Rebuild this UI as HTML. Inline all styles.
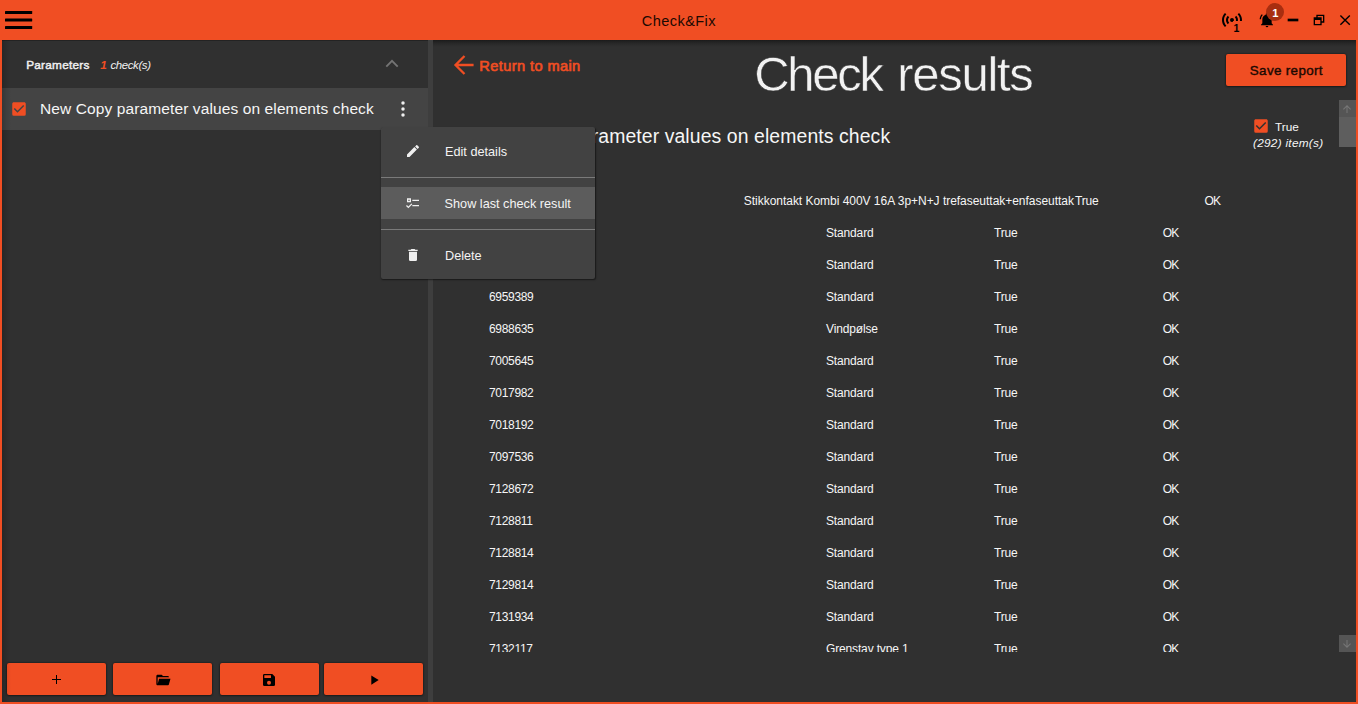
<!DOCTYPE html>
<html lang="en">
<head>
<meta charset="utf-8">
<title>Check&amp;Fix</title>
<style>
html,body{margin:0;padding:0;}
body{width:1358px;height:704px;overflow:hidden;background:#F04E23;position:relative;
  font-family:"Liberation Sans",sans-serif;color:#f4f4f4;}
.abs{position:absolute;}
.t{position:absolute;white-space:nowrap;line-height:1;}
svg{position:absolute;display:block;overflow:visible;}
#content{position:absolute;left:2px;top:40px;width:1354px;height:662px;background:#303030;overflow:hidden;}
/* title bar */
#title{left:641.8px;top:14.4px;font-size:14.6px;letter-spacing:.4px;color:#1b0902;}
.bar{position:absolute;left:5px;width:27px;height:3px;background:#000;}
/* left panel */
#lp-shadow{left:0;top:0;width:426px;height:1px;background:#232323;}
#splitter{left:426px;top:0;width:5px;height:662px;background:#3e3e3e;}
#rp-shadow{left:431px;top:0;width:923px;height:7px;background:linear-gradient(#1a1a1a,#222 25%,#2a2a2a 60%,#303030);}
#row{left:0;top:48px;width:426px;height:42px;background:#444444;}
/* bottom buttons */
.bbtn{position:absolute;top:623px;width:99px;height:32px;background:#F04E23;border-radius:2px;
  box-shadow:0 0 2px rgba(0,0,0,.7),0 1px 2px rgba(0,0,0,.3);}
/* menu */
#menu{left:379px;top:87px;width:214px;height:152px;background:#424242;border-radius:2px;
  box-shadow:.5px 1px 1.5px rgba(0,0,0,.5);}
#menu .hl{position:absolute;left:0;top:60px;width:214px;height:32px;background:#5c5c5c;}
#menu .sep{position:absolute;left:0;width:214px;height:1px;background:#7a7a7a;}
.mi{font-size:12.7px;color:#f4f4f4;}
/* table */
#list{left:431px;top:0;width:908px;height:612px;overflow:hidden;}
.c{position:absolute;white-space:nowrap;line-height:1;font-size:12px;margin-top:-.3px;letter-spacing:-.15px;color:#f6f6f6;}
.ca{left:56px;letter-spacing:-.32px}.cb{left:393px}.cc{left:561px}.cd{left:729.8px;letter-spacing:-.8px}
/* scrollbar */
.sb{position:absolute;left:1337px;width:17px;}
</style>
</head>
<body>

<!-- ===== title bar ===== -->
<svg style="left:0;top:0" width="40" height="40" viewBox="0 0 40 40"><g fill="#000"><rect x="5" y="11" width="27.2" height="3" rx=".6"/><rect x="5" y="18.5" width="27.2" height="3" rx=".6"/><rect x="5" y="26" width="27.2" height="3" rx=".6"/></g></svg>
<div class="t" id="title">Check&amp;Fix</div>

<!-- access point icon -->
<svg style="left:1220px;top:8px" width="24" height="24" viewBox="0 0 24 24"><path fill="#000" d="M4.93,4.93C3.12,6.74 2,9.24 2,12C2,14.76 3.12,17.26 4.93,19.07L6.34,17.66C4.89,16.22 4,14.22 4,12C4,9.79 4.89,7.78 6.34,6.34L4.93,4.93M19.07,4.93L17.66,6.34C19.11,7.78 20,9.79 20,12C20,14.22 19.11,16.22 17.66,17.66L19.07,19.07C20.88,17.26 22,14.76 22,12C22,9.24 20.88,6.74 19.07,4.93M7.76,7.76C6.67,8.85 6,10.35 6,12C6,13.65 6.67,15.15 7.76,16.24L9.17,14.83C8.45,14.11 8,13.11 8,12C8,10.89 8.45,9.89 9.17,9.17L7.76,7.76M16.24,7.76L14.83,9.17C15.55,9.89 16,10.89 16,12C16,13.11 15.55,14.11 14.83,14.83L16.24,16.24C17.33,15.15 18,13.65 18,12C18,10.35 17.33,8.85 16.24,7.76M12,10A2,2 0 0,0 10,12A2,2 0 0,0 12,14A2,2 0 0,0 14,12A2,2 0 0,0 12,10Z"/></svg>
<div class="abs" style="left:1232.5px;top:21px;width:12px;height:12px;background:#F04E23"></div>
<div class="t" id="ap1" style="left:1233.4px;top:23.1px;font-size:10.5px;font-weight:bold;color:#000">1</div>

<!-- bell -->
<svg style="left:1259px;top:12px" width="16" height="16" viewBox="0 0 24 24"><path fill="#000" d="M21,19V20H3V19L5,17V11C5,7.9 7.03,5.17 10,4.29C10,4.19 10,4.1 10,4A2,2 0 0,1 12,2A2,2 0 0,1 14,4C14,4.1 14,4.19 14,4.29C16.97,5.17 19,7.9 19,11V17L21,19M14,21A2,2 0 0,1 12,23A2,2 0 0,1 10,21M19.75,3.19L18.33,4.61C20.04,6.3 21,8.6 21,11H23C23,8.07 21.84,5.25 19.75,3.19M1,11H3C3,8.6 3.96,6.3 5.67,4.61L4.25,3.19C2.16,5.25 1,8.07 1,11Z"/></svg>
<div class="abs" style="left:1266px;top:3px;width:18px;height:18px;border-radius:9px;background:#A82E10"></div>
<div class="t" id="badge1" style="left:1272.2px;top:8.2px;font-size:11.2px;font-weight:bold;color:#fff">1</div>

<!-- window buttons -->
<svg style="left:1285px;top:12px" width="16" height="16" viewBox="0 0 24 24"><path fill="#000" d="M20,14H4V10H20Z"/></svg>
<svg style="left:1311px;top:12px" width="16" height="16" viewBox="0 0 24 24"><path fill="#000" d="M4,8H8V4H20V16H16V20H4V8M16,8V14H18V6H10V8H16M6,12V18H14V12H6Z"/></svg>
<svg style="left:1337px;top:12px" width="16" height="16" viewBox="0 0 16 16"><path fill="none" stroke="#000" stroke-width="1.4" d="M3.4,3.4L12.8,12.8M12.8,3.4L3.4,12.8"/></svg>

<!-- ===== content ===== -->
<div id="content">
  <div class="abs" id="lp-shadow"></div>
  <div class="abs" id="splitter"></div>
  <div class="abs" id="rp-shadow"></div>

  <!-- left panel header -->
  <div class="t" id="params" style="left:24.2px;top:19.8px;font-size:11.8px;letter-spacing:.25px;-webkit-text-stroke:.45px #f0f0f0;color:#f0f0f0">Parameters</div>
  <div class="t" id="cnt1" style="left:98.2px;top:19.8px;font-size:11.8px;font-style:italic;font-weight:bold;color:#F04E23">1</div>
  <div class="t" id="cnts" style="left:108.4px;top:19.8px;font-size:11.4px;letter-spacing:-.35px;font-style:italic;color:#f0f0f0">check(s)</div>
  <svg style="left:378px;top:12px" width="24" height="24" viewBox="0 0 24 24"><path fill="none" stroke="#747474" stroke-width="1.9" d="M6.3,14.6L12,8.9L17.7,14.6"/></svg>

  <!-- list row -->
  <div class="abs" id="row"></div>
  <svg style="left:7.75px;top:60.25px" width="18" height="18" viewBox="0 0 24 24"><path fill="#F04E23" d="M10,17L5,12L6.41,10.58L10,14.17L17.59,6.58L19,8M19,3H5C3.89,3 3,3.89 3,5V19A2,2 0 0,0 5,21H19A2,2 0 0,0 21,19V5C21,3.89 20.1,3 19,3Z"/></svg>
  <div class="t" id="rowtxt" style="left:38px;top:60.8px;font-size:15.5px;letter-spacing:.11px;color:#f6f6f6">New Copy parameter values on elements check</div>
  <svg style="left:389px;top:57px" width="24" height="24" viewBox="0 0 24 24"><g fill="#f0f0f0"><circle cx="12" cy="6.1" r="1.75"/><circle cx="12" cy="12" r="1.75"/><circle cx="12" cy="17.9" r="1.75"/></g></svg>

  <!-- bottom buttons -->
  <div class="bbtn" style="left:5px"><div class="abs" style="left:45px;top:16px;width:9px;height:1px;background:#000"></div><div class="abs" style="left:49px;top:12px;width:1px;height:9px;background:#000"></div></div>
  <div class="bbtn" style="left:111px"><svg style="left:41.5px;top:8.6px" width="16" height="16" viewBox="0 0 24 24"><path fill="#000" d="M19,20H4C2.89,20 2,19.1 2,18V6C2,4.89 2.89,4 4,4H10L12,6H19A2,2 0 0,1 21,8H21L4,8V18L6.14,10H23.21L20.93,18.5C20.7,19.37 19.92,20 19,20Z"/></svg></div>
  <div class="bbtn" style="left:218px"><svg style="left:41px;top:8.6px" width="16" height="16" viewBox="0 0 24 24"><path fill="#000" d="M15,9H5V5H15M12,19A3,3 0 0,1 9,16A3,3 0 0,1 12,13A3,3 0 0,1 15,16A3,3 0 0,1 12,19M17,3H5C3.89,3 3,3.9 3,5V19A2,2 0 0,0 5,21H19A2,2 0 0,0 21,19V7L17,3Z"/></svg></div>
  <div class="bbtn" style="left:322px"><svg style="left:41.5px;top:8.5px" width="16" height="16" viewBox="0 0 24 24"><path fill="#000" d="M8,5.14V19.14L19,12.14L8,5.14Z"/></svg></div>

  <!-- right panel header -->
  <svg style="left:450px;top:13px" width="24" height="24" viewBox="0 0 24 24"><path fill="none" stroke="#F04E23" stroke-width="2.3" d="M21.6,12H3.6M12.5,3L3.5,12L12.5,21"/></svg>
  <div class="t" id="ret" style="left:477.3px;top:18.7px;font-size:14.6px;letter-spacing:.4px;-webkit-text-stroke:.65px #F04E23;color:#F04E23">Return to main</div>
  <div class="t" id="h1" style="left:752.2px;top:10px;font-size:49px;color:#f2f2f2;-webkit-text-stroke:.5px #303030"><span id="h1a" style="letter-spacing:-2.3px">Check</span><span id="h1b" style="letter-spacing:-1.3px;margin-left:15.7px">results</span></div>
  <div class="abs" id="savebtn" style="left:1224px;top:14px;width:120px;height:32px;background:#F04E23;border-radius:2px;box-shadow:0 0 2px rgba(0,0,0,.7),0 1px 2px rgba(0,0,0,.3)"></div>
  <div class="t" id="savetxt" style="left:1247.8px;top:24.4px;font-size:13.4px;letter-spacing:.35px;-webkit-text-stroke:.4px #1b0902;color:#1b0902">Save report</div>

  <div class="t" id="h2" style="left:472.2px;top:86.8px;font-size:19.4px;letter-spacing:.1px;color:#f6f6f6">New Copy parameter values on elements check</div>

  <svg style="left:1249.75px;top:76.75px" width="18" height="18" viewBox="0 0 24 24"><path fill="#F04E23" d="M10,17L5,12L6.41,10.58L10,14.17L17.59,6.58L19,8M19,3H5C3.89,3 3,3.89 3,5V19A2,2 0 0,0 5,21H19A2,2 0 0,0 21,19V5C21,3.89 20.1,3 19,3Z"/></svg>
  <div class="t" id="true" style="left:1273px;top:82.4px;font-size:11.8px;color:#f6f6f6">True</div>
  <div class="t" id="items" style="left:1251px;top:98.4px;font-size:11.8px;letter-spacing:.27px;font-style:italic;color:#f6f6f6">(292) item(s)</div>

  <!-- table -->
  <div class="abs" id="list">
    <div class="c r1" style="left:56px;top:155px">6959380</div>
    <div class="c r1" id="r1b" style="left:310.8px;top:155px;letter-spacing:-.03px">Stikkontakt Kombi 400V 16A 3p+N+J trefaseuttak+enfaseuttak</div>
    <div class="c r1" id="r1c" style="left:641.9px;top:155px">True</div>
    <div class="c r1" id="r1d" style="left:771.4px;top:155px;letter-spacing:-.8px">OK</div>
    <div class="c ca" style="top:187px">6959383</div><div class="c cb" style="top:187px">Standard</div><div class="c cc" style="top:187px">True</div><div class="c cd" style="top:187px">OK</div>
    <div class="c ca" style="top:219px">6959386</div><div class="c cb" style="top:219px">Standard</div><div class="c cc" style="top:219px">True</div><div class="c cd" style="top:219px">OK</div>
    <div class="c ca" style="top:251px">6959389</div><div class="c cb" style="top:251px">Standard</div><div class="c cc" style="top:251px">True</div><div class="c cd" style="top:251px">OK</div>
    <div class="c ca" style="top:283px">6988635</div><div class="c cb" style="top:283px">Vindpølse</div><div class="c cc" style="top:283px">True</div><div class="c cd" style="top:283px">OK</div>
    <div class="c ca" style="top:315px">7005645</div><div class="c cb" style="top:315px">Standard</div><div class="c cc" style="top:315px">True</div><div class="c cd" style="top:315px">OK</div>
    <div class="c ca" style="top:347px">7017982</div><div class="c cb" style="top:347px">Standard</div><div class="c cc" style="top:347px">True</div><div class="c cd" style="top:347px">OK</div>
    <div class="c ca" style="top:379px">7018192</div><div class="c cb" style="top:379px">Standard</div><div class="c cc" style="top:379px">True</div><div class="c cd" style="top:379px">OK</div>
    <div class="c ca" style="top:411px">7097536</div><div class="c cb" style="top:411px">Standard</div><div class="c cc" style="top:411px">True</div><div class="c cd" style="top:411px">OK</div>
    <div class="c ca" style="top:443px">7128672</div><div class="c cb" style="top:443px">Standard</div><div class="c cc" style="top:443px">True</div><div class="c cd" style="top:443px">OK</div>
    <div class="c ca" style="top:475px">7128811</div><div class="c cb" style="top:475px">Standard</div><div class="c cc" style="top:475px">True</div><div class="c cd" style="top:475px">OK</div>
    <div class="c ca" style="top:507px">7128814</div><div class="c cb" style="top:507px">Standard</div><div class="c cc" style="top:507px">True</div><div class="c cd" style="top:507px">OK</div>
    <div class="c ca" style="top:539px">7129814</div><div class="c cb" style="top:539px">Standard</div><div class="c cc" style="top:539px">True</div><div class="c cd" style="top:539px">OK</div>
    <div class="c ca" style="top:571px">7131934</div><div class="c cb" style="top:571px">Standard</div><div class="c cc" style="top:571px">True</div><div class="c cd" style="top:571px">OK</div>
    <div class="c ca" style="top:603px">7132117</div><div class="c cb" style="top:603px">Grenstav type 1</div><div class="c cc" style="top:603px">True</div><div class="c cd" style="top:603px">OK</div>
  </div>

  <!-- scrollbar -->
  <div class="sb" style="top:60px;height:17px;background:#555555"><svg style="left:1.6px;top:2.6px" width="12" height="12" viewBox="0 0 24 24"><path fill="#777" d="M13,20H11V8L5.5,13.5L4.08,12.08L12,4.16L19.92,12.08L18.5,13.5L13,8V20Z"/></svg></div>
  <div class="sb" style="top:77px;height:30px;background:#5e5e5e"></div>
  <div class="sb" style="top:595px;height:17px;background:#555555"><svg style="left:1.6px;top:2.5px" width="12" height="12" viewBox="0 0 24 24"><path fill="#777" d="M11,4H13V16L18.5,10.5L19.92,11.92L12,19.84L4.08,11.92L5.5,10.5L11,16V4Z"/></svg></div>

  <div class="abs" id="edgeshade" style="left:0;top:0;width:9px;height:662px;background:linear-gradient(to right,rgba(0,0,0,.2),rgba(0,0,0,.08) 50%,rgba(0,0,0,0))"></div>

  <!-- context menu -->
  <div class="abs" id="menu">
    <div class="hl"></div>
    <div class="sep" style="top:50px"></div>
    <div class="sep" style="top:102px"></div>
    <svg style="left:24px;top:16px" width="16" height="16" viewBox="0 0 24 24"><path fill="#f0f0f0" d="M20.71,7.04C21.1,6.65 21.1,6 20.71,5.63L18.37,3.29C18,2.9 17.35,2.9 16.96,3.29L15.12,5.12L18.87,8.87M3,17.25V21H6.75L17.81,9.93L14.06,6.18L3,17.25Z"/></svg>
    <div class="t mi" id="m1" style="left:64px;top:18.9px">Edit details</div>
    <svg style="left:24px;top:68px" width="16" height="16" viewBox="0 0 24 24"><path fill="#f0f0f0" d="M3,5H9V11H3V5M5,7V9H7V7H5M11,7H21V9H11V7M11,15H21V17H11V15M5,20L1.5,16.5L2.91,15.09L5,17.17L9.59,12.59L11,14L5,20Z"/></svg>
    <div class="t mi" id="m2" style="left:63.6px;top:70.8px">Show last check result</div>
    <svg style="left:24px;top:120px" width="16" height="16" viewBox="0 0 24 24"><path fill="#f0f0f0" d="M19,4H15.5L14.5,3H9.5L8.5,4H5V6H19M6,19A2,2 0 0,0 8,21H16A2,2 0 0,0 18,19V7H6V19Z"/></svg>
    <div class="t mi" id="m3" style="left:64px;top:122.7px">Delete</div>
  </div>
</div>

</body>
</html>
